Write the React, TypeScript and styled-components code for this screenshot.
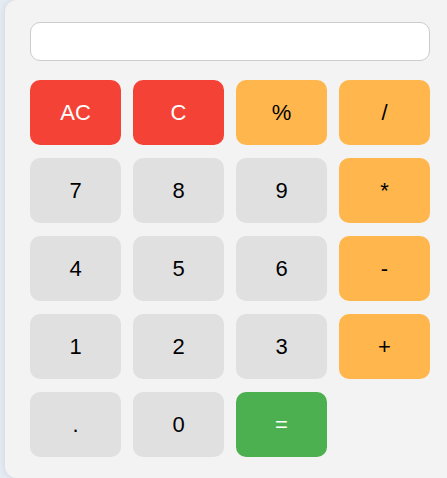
import styled, { createGlobalStyle } from "styled-components";

const GlobalStyle = createGlobalStyle`
  html, body {
    margin: 0;
    padding: 0;
    background: #e6ecf3;
    font-family: "Liberation Sans", Arial, sans-serif;
    overflow: hidden;
  }
`;

const Page = styled.div`
  padding-left: 5px;
`;

const Calculator = styled.div`
  box-sizing: border-box;
  width: 460px;
  height: 478px;
  padding: 22px 25px 21px 25px;
  background: #f3f3f3;
  border-radius: 12px;
  box-shadow: 0 0 10px rgba(0, 0, 0, 0.1);
`;

const Display = styled.input`
  box-sizing: border-box;
  display: block;
  width: 400px;
  height: 39px;
  margin: 0 0 19px 0;
  padding: 0 10px;
  border: 1px solid #cccccc;
  border-radius: 10px;
  background: #ffffff;
  font-family: inherit;
  font-size: 22px;
  text-align: right;
  outline: none;
`;

const Keys = styled.div`
  display: grid;
  grid-template-columns: repeat(4, 91px);
  grid-auto-rows: 65px;
  column-gap: 12px;
  row-gap: 13px;
`;

type Kind = "num" | "clear" | "op" | "equals";

const palette: Record<Kind, { bg: string; fg: string }> = {
  num: { bg: "#e0e0e0", fg: "#000000" },
  clear: { bg: "#f44336", fg: "#ffffff" },
  op: { bg: "#ffb74d", fg: "#000000" },
  equals: { bg: "#4caf50", fg: "#ffffff" },
};

const Key = styled.button<{ $kind: Kind }>`
  border: none;
  border-radius: 10px;
  padding: 0;
  font-family: inherit;
  font-size: 22px;
  cursor: pointer;
  background: ${(p) => palette[p.$kind].bg};
  color: ${(p) => palette[p.$kind].fg};
`;

const keys: { label: string; kind: Kind }[] = [
  { label: "AC", kind: "clear" },
  { label: "C", kind: "clear" },
  { label: "%", kind: "op" },
  { label: "/", kind: "op" },
  { label: "7", kind: "num" },
  { label: "8", kind: "num" },
  { label: "9", kind: "num" },
  { label: "*", kind: "op" },
  { label: "4", kind: "num" },
  { label: "5", kind: "num" },
  { label: "6", kind: "num" },
  { label: "-", kind: "op" },
  { label: "1", kind: "num" },
  { label: "2", kind: "num" },
  { label: "3", kind: "num" },
  { label: "+", kind: "op" },
  { label: ".", kind: "num" },
  { label: "0", kind: "num" },
  { label: "=", kind: "equals" },
];

export default function App() {
  return (
    <Page>
      <GlobalStyle />
      <Calculator>
        <Display type="text" readOnly value="" />
        <Keys>
          {keys.map((k) => (
            <Key key={k.label} $kind={k.kind}>
              {k.label}
            </Key>
          ))}
        </Keys>
      </Calculator>
    </Page>
  );
}
